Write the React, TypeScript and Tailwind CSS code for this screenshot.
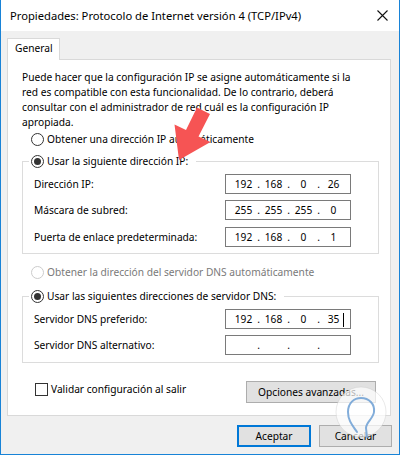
import React from "react";

function Radio({ checked, disabled }: { checked?: boolean; disabled?: boolean }) {
  return (
    <span
      className={
        "flex h-[13px] w-[13px] shrink-0 items-center justify-center rounded-full border bg-white " +
        (disabled ? "border-[#cccccc]" : "border-[#333333]")
      }
    >
      {checked ? <span className="h-[7px] w-[7px] rounded-full bg-[#333333]" /> : null}
    </span>
  );
}

function IpBox({ parts, caret }: { parts: string[]; caret?: boolean }) {
  return (
    <div className="flex h-[20px] w-[126px] items-center border border-[#7a7a7a] bg-white pl-[6px]">
      {parts.map((p, i) => (
        <React.Fragment key={i}>
          <span className="relative w-[23px] text-center">
            {p}
            {caret && i === 3 ? (
              <span className="absolute right-[1px] top-[1px] h-[14px] w-px bg-black" />
            ) : null}
          </span>
          {i < 3 ? <span className="w-[7px] text-center">.</span> : null}
        </React.Fragment>
      ))}
    </div>
  );
}

function Row({ label, parts, caret, mt }: { label: string; parts: string[]; caret?: boolean; mt: string }) {
  return (
    <div className={"flex items-center justify-between " + mt}>
      <span className="pl-[3px] leading-[15px]">{label}</span>
      <IpBox parts={parts} caret={caret} />
    </div>
  );
}

export default function App() {
  return (
    <div
      className="relative flex h-[455px] w-[400px] flex-col overflow-hidden border-x border-b border-[#1883d7] bg-[#f0f0f0] text-[10.2px] leading-[15px] text-black"
      style={{ fontFamily: '"Noto Sans", sans-serif' }}
    >
      {/* title bar */}
      <div className="flex h-[31px] shrink-0 items-center justify-between bg-white pl-[9px] pr-[10px]">
        <span className="text-[11.2px]">Propiedades: Protocolo de Internet versión 4 (TCP/IPv4)</span>
        <svg width="11" height="11" viewBox="0 0 11 11" className="mr-[1px]">
          <path d="M0.5 0.5 L10.5 10.5 M10.5 0.5 L0.5 10.5" stroke="#111" strokeWidth="1.1" />
        </svg>
      </div>

      <div className="flex flex-1 flex-col px-[6px]">
        {/* tab */}
        <div className="mt-[7px] flex">
          <div className="relative z-10 -mb-px h-[22px] w-[53px] border-x border-t border-[#d9d9d9] bg-white pl-[7px] pt-[2px]">
            General
          </div>
        </div>

        {/* panel */}
        <div className="flex h-[357px] w-[384px] flex-col border border-[#d9d9d9] bg-white">
          <p className="whitespace-nowrap pl-[14px] pt-[10px]">
            Puede hacer que la configuración IP se asigne automáticamente si la
            <br />
            red es compatible con esta funcionalidad. De lo contrario, deberá
            <br />
            consultar con el administrador de red cuál es la configuración IP
            <br />
            apropiada.
          </p>

          <div className="mt-[2px] flex h-[15px] items-center gap-[3px] pl-[23px]">
            <Radio />
            <span>Obtener una dirección IP automáticamente</span>
          </div>

          {/* group 1 */}
          <div className="ml-[14px] mt-[14px] w-[357px] border border-[#dcdcdc] pb-[6px] pl-[8px] pr-[27px]">
            <div className="-ml-[2px] -mt-[8px] flex h-[15px] w-fit items-center gap-[3px] bg-white pl-[2px] pr-[8px]">
              <Radio checked />
              <span>Usar la siguiente dirección IP:</span>
            </div>
            <Row label="Dirección IP:" parts={["192", "168", "0", "26"]} mt="mt-[5px]" />
            <Row label="Máscara de subred:" parts={["255", "255", "255", "0"]} mt="mt-[6px]" />
            <Row label="Puerta de enlace predeterminada:" parts={["192", "168", "0", "1"]} mt="mt-[7px]" />
          </div>

          <div className="mt-[11px] flex h-[15px] items-center gap-[3px] pl-[23px] text-[#7a7a7a]">
            <Radio disabled />
            <span>Obtener la dirección del servidor DNS automáticamente</span>
          </div>

          {/* group 2 */}
          <div className="ml-[14px] mt-[16px] w-[357px] border border-[#dcdcdc] pb-[7px] pl-[8px] pr-[27px]">
            <div className="-ml-[2px] -mt-[8px] flex h-[15px] w-fit items-center gap-[3px] bg-white pl-[2px] pr-[8px]">
              <Radio checked />
              <span>Usar las siguientes direcciones de servidor DNS:</span>
            </div>
            <Row label="Servidor DNS preferido:" parts={["192", "168", "0", "35"]} caret mt="mt-[5px]" />
            <Row label="Servidor DNS alternativo:" parts={["", "", "", ""]} mt="mt-[6px]" />
          </div>

          <div className="mt-[18px] flex h-[22px] items-start justify-between pl-[27px] pr-[14px]">
            <div className="mt-[1px] flex h-[15px] items-center gap-[3px]">
              <span className="h-[13px] w-[13px] border border-[#333333] bg-white" />
              <span>Validar configuración al salir</span>
            </div>
            <button className="flex h-[22px] w-[130px] items-center justify-center border border-[#adadad] bg-[#e1e1e1]">
              Opciones avanzadas...
            </button>
          </div>
        </div>

        {/* footer buttons */}
        <div className="mt-[9px] flex justify-end gap-[8px] pr-[1px]">
          <button className="flex h-[22px] w-[74px] items-center justify-center border-2 border-[#0078d7] bg-[#e1e1e1]">
            Aceptar
          </button>
          <button className="flex h-[22px] w-[73px] items-center justify-center border border-[#adadad] bg-[#e1e1e1]">
            Cancelar
          </button>
        </div>
      </div>

      {/* overlays: red arrow and watermark */}
      <svg className="pointer-events-none absolute left-0 top-0" width="400" height="455">
        <polygon
          points="178,160 173.5,124.5 185,130 196,107.5 209,114 197.5,136.5 209.5,142"
          fill="#f65454"
        />
        <circle cx="360" cy="412" r="25" fill="rgba(255,255,255,0.7)" stroke="rgba(200,200,200,0.4)" />
        <path
          d="M356 432 C352 426 347 421 347 412 C347 403 353 398 360 398 C368 398 374 404 373 412 C372 419 365 422 365 428 L366 437"
          fill="none"
          stroke="#6c9fd3"
          strokeWidth="2"
          strokeLinecap="round"
          opacity="0.85"
        />
      </svg>
    </div>
  );
}
